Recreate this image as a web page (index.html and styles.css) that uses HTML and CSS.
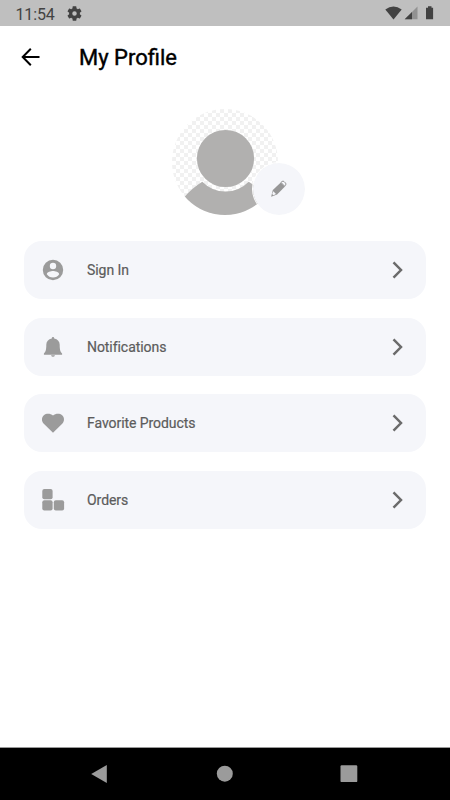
FILE: index.html
```html
<!DOCTYPE html>
<html lang="en">
<head>
<meta charset="utf-8">
<title>My Profile</title>
<link rel="stylesheet" href="styles.css">
</head>
<body>
<div class="screen">
  <div class="status">
    <span class="time">11:54</span>
    <svg class="gear" width="15" height="15" viewBox="2 2 20 20"><path d="M19.14 12.94c.04-.3.06-.61.06-.94 0-.32-.02-.64-.07-.94l2.03-1.58a.49.49 0 0 0 .12-.61l-1.92-3.32a.488.488 0 0 0-.59-.22l-2.39.96c-.5-.38-1.03-.7-1.62-.94l-.36-2.54a.484.484 0 0 0-.48-.41h-3.84c-.24 0-.43.17-.47.41l-.36 2.54c-.59.24-1.13.57-1.62.94l-2.39-.96c-.22-.08-.47 0-.59.22L2.74 8.87c-.12.21-.08.47.12.61l2.03 1.58c-.05.3-.09.63-.09.94s.02.64.07.94l-2.03 1.58a.49.49 0 0 0-.12.61l1.92 3.32c.12.22.37.29.59.22l2.39-.96c.5.38 1.03.7 1.62.94l.36 2.54c.05.24.24.41.48.41h3.84c.24 0 .44-.17.47-.41l.36-2.54c.59-.24 1.13-.56 1.62-.94l2.39.96c.22.08.47 0 .59-.22l1.920-3.320c.12-.22.07-.47-.12-.61l-2.010-1.580zM12 15A3 3 0 1 1 12 9a3 3 0 0 1 0 6z"/></svg>
    <svg class="signals" width="50" height="16" viewBox="0 0 50 16"><path d="M.3 3.400Q8.500-2.400 16.700 3.400L8.500 13.500z"/><path class="faint" d="M32.500 .500v12.800H19.700z"/><path d="M27 6v7.300h-7.300z"/><path d="M41 1.800h2V.3h3.500v1.500h1.600v11.500H41z"/></svg>
  </div>
  <header class="bar">
    <svg class="back" width="20" height="20" viewBox="0 0 20 20"><path d="M18.500 10H2M9.800 1.800L1.700 10l8.100 8.200"/></svg>
    <h1>My Profile</h1>
  </header>
  <main>
    <div class="avatar">
      <svg width="106" height="106" viewBox="0 0 106 106">
        <defs>
          <pattern id="check" width="8" height="8" patternUnits="userSpaceOnUse"><path class="tile" d="M0 0h4v4H0zM4 4h4v4H4z"/></pattern>
          <clipPath id="disc"><circle cx="53" cy="53" r="53"/></clipPath>
        </defs>
        <g clip-path="url(#disc)">
          <rect width="106" height="106" fill="url(#check)"/>
          <circle class="person" cx="53.500" cy="49.500" r="28.600"/>
          <path class="person" d="M12 88.500Q20 79 30.300 72.700Q40 82.500 53.500 82.500T76.700 72.700Q87 79 95 88.500V106H12z"/>
        </g>
      </svg>
      <div class="edit">
        <svg width="18" height="18" viewBox="0 0 18 18"><path class="pencil" d="M2.800 10.100L10.800 2.400l4.200 4.200-7.900 7.800-6 2.400z"/><path class="pencil-line" d="M11 2.400l1-.9q1-.8 2 0l1.500 1.500q1 1 .1 2l-1 1.200z"/><path class="pencil-tip" d="M3.300 11.300l2.700 2.800-2.600 1.100-1.200-1.200z"/></svg>
      </div>
    </div>
    <nav class="menu">
      <a class="item">
        <svg class="icon" width="24" height="24" viewBox="0 0 24 24"><path d="M12 1.800a10.200 10.200 0 1 0 0 20.400 10.200 10.200 0 0 0 0-20.400zm0 3a3.200 3.200 0 1 1 0 6.400 3.200 3.200 0 0 1 0-6.400zm0 14.700c-2.600 0-4.900-1.300-6.200-3.300 0-2 4.100-3.100 6.200-3.100s6.200 1.100 6.200 3.100a7.300 7.300 0 0 1-6.200 3.300z"/></svg>
        <span>Sign In</span>
        <svg class="chevron" width="14" height="20" viewBox="0 0 14 20"><path d="M2.500 2.300l7.500 7.700-7.500 7.700"/></svg>
      </a>
      <a class="item">
        <svg class="icon" width="24" height="24" viewBox="0 0 24 24"><path d="M12 2c.8 0 1.200.6 1.200 1.400 3.500.7 5.500 3 5.500 6.400 0 4.700.5 7 2.400 8.700v1.200H2.900v-1.200C4.800 16.800 5.300 14.500 5.300 9.800c0-3.400 2-5.700 5.500-6.400C10.800 2.600 11.200 2 12 2zM10 20.300h4q-.5 1.500-2 1.500t-2-1.500z"/></svg>
        <span>Notifications</span>
        <svg class="chevron" width="14" height="20" viewBox="0 0 14 20"><path d="M2.500 2.300l7.500 7.700-7.500 7.700"/></svg>
      </a>
      <a class="item">
        <svg class="icon" width="24" height="24" viewBox="0 0 24 24"><path d="M12 21.800L2.800 12.700C.2 10 .6 6.200 2.900 4.200c2.600-2.300 6.600-1.800 9.100.3 2.500-2.100 6.500-2.600 9.100-.3 2.300 2 2.700 5.800.1 8.500z"/></svg>
        <span>Favorite Products</span>
        <svg class="chevron" width="14" height="20" viewBox="0 0 14 20"><path d="M2.500 2.300l7.500 7.700-7.500 7.700"/></svg>
      </a>
      <a class="item">
        <svg class="icon" width="24" height="24" viewBox="0 0 24 24"><rect x="1.300" y="1" width="10.300" height="10.300" rx="2"/><rect x="1.300" y="12.200" width="10.300" height="10.300" rx="2"/><rect x="12.800" y="12.200" width="10.300" height="10.300" rx="2"/></svg>
        <span>Orders</span>
        <svg class="chevron" width="14" height="20" viewBox="0 0 14 20"><path d="M2.500 2.300l7.500 7.700-7.500 7.700"/></svg>
      </a>
    </nav>
  </main>
  <footer class="navbar">
    <svg width="20" height="20" viewBox="0 0 20 20"><path d="M1.200 10L16.800 1v18z"/></svg>
    <svg width="20" height="20" viewBox="0 0 20 20"><circle cx="9.800" cy="9.700" r="8"/></svg>
    <svg width="20" height="20" viewBox="0 0 20 20"><rect x="1.500" y="1.300" width="16.800" height="16.800" rx="1.200"/></svg>
  </footer>
</div>
</body>
</html>
```
FILE: styles.css
```css
* { box-sizing: border-box; }
body { margin: 0; background: #fff; font-family: Roboto, "Liberation Sans", sans-serif; }
svg { display: block; flex: none; }
.screen { width: 450px; height: 800px; display: flex; flex-direction: column; overflow: hidden; }
.status { height: 26px; background: #bfbfbf; display: flex; align-items: center; padding: 1px 15px 0 15.500px; color: #424242; fill: #424242; }
.time { font-size: 16px; line-height: 20px; letter-spacing: -0.15px; padding-top: 2px; }
.gear { margin-left: 12px; }
.signals { margin-left: auto; }
.faint { fill: #929292; }
.bar { height: 62px; display: flex; align-items: center; padding-left: 21px; }
.back { fill: none; stroke: #000; stroke-width: 2; }
h1 { margin: 1px 0 0 38px; font-size: 22px; font-weight: 400; line-height: 28px; letter-spacing: 0; -webkit-text-stroke: 0.4px #000; }
main { flex: 1; padding: 21px 24px 0; }
.avatar { position: relative; width: 106px; height: 106px; margin: 0 auto; }
.tile { fill: #f1f1f1; }
.person { fill: #b1b0af; }
.edit { position: absolute; left: 80px; top: 53px; width: 54px; height: 54px; border: 1.500px solid #fff; border-radius: 50%; background: #f5f6fa; background-clip: padding-box; display: flex; align-items: center; justify-content: center; }
.pencil { fill: #979797; }
.pencil-line { fill: #f5f6fa; stroke: #979797; stroke-width: 1; }
.pencil-tip { fill: #f5f6fa; }
.menu { margin-top: 26px; display: flex; flex-direction: column; gap: 18.500px; }
.item { height: 58px; border-radius: 18px; background: #f5f6fa; display: flex; align-items: center; padding: 0.500px 21px 0 17px; color: #5c5c5c; font-size: 14px; letter-spacing: -0.06px; -webkit-text-stroke: 0.2px #5c5c5c; }
.icon { fill: #9b9b9b; margin-right: 22px; }
.chevron { margin-left: auto; fill: none; stroke: #6b6b6b; stroke-width: 2.500; }
.navbar { height: 53px; background: #000; border-top: 1px solid #999; display: flex; align-items: center; justify-content: space-between; padding: 0 91px 0 90px; fill: #9b9b9b; }
```
